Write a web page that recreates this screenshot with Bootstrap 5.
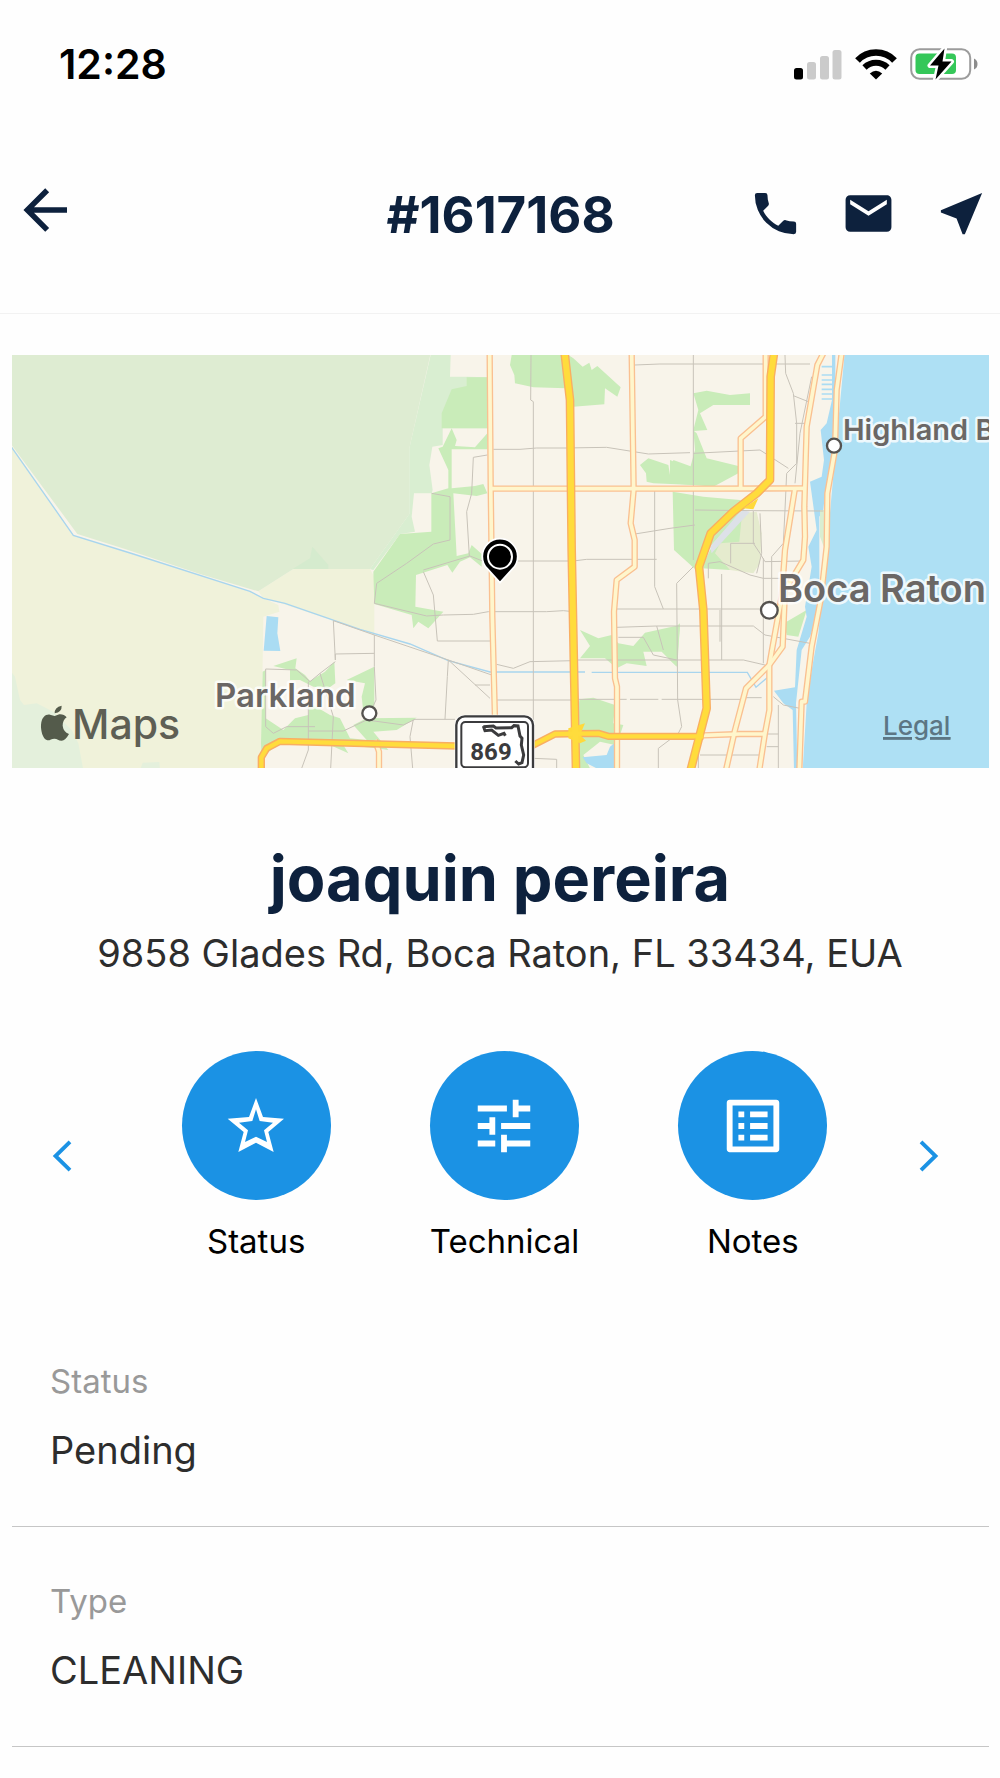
<!DOCTYPE html>
<html lang="en">
<head>
<meta charset="utf-8">
<meta name="viewport" content="width=device-width, initial-scale=1">
<title>#1617168</title>
<link href="https://cdn.jsdelivr.net/npm/bootstrap@5.3.0/dist/css/bootstrap.min.css" rel="stylesheet">
<style>
  :root { --ink: #0d213d; --accent: #1b92e4; --gutter: 12px; --gutter-end: 11px; }
  body { font-family: Inter, "Liberation Sans", sans-serif; background: #fefefe; color: #2d2d2d; }
  svg { display: block; flex: none; }
  .plain-btn { background: none; border: 0; padding: 0; color: inherit; }
  .status-strip { padding: 40px 22px 0 59px; color: #000; }
  .clock { font-size: 41px; line-height: 48px; font-weight: 600; }
  .status-icons { gap: 13px; }
  .top-bar { display: grid; grid-template-columns: 1fr auto 1fr; align-items: end; padding: 89px var(--gutter-end) 70px var(--gutter); border-bottom: 1px solid #f2f2f2; color: var(--ink); }
  .order-no { font-size: 51px; line-height: 56px; font-weight: 700; }
  .top-actions { gap: 38px; padding-bottom: 2px; }
  .map-box { margin: 41px var(--gutter-end) 0 var(--gutter); }
  .map-box svg { width: 100%; height: auto; }
  .place { font-family: Inter, "Liberation Sans", sans-serif; font-weight: 600; fill: #6b6765; stroke: #fff; stroke-opacity: .8; stroke-width: 5px; stroke-linejoin: round; paint-order: stroke; }
  .client-name { font-size: 63px; line-height: 76px; font-weight: 700; color: var(--ink); margin: 72px 0 14px; }
  .client-address { font-size: 38px; line-height: 46px; margin: 0; }
  .action-strip { padding: 0 41px 0 32px; margin-top: 75px; color: var(--accent); }
  .action-grid { padding: 0 20px 0 38px; }
  .action-disc { width: 149px; height: 149px; background: var(--accent); color: #fff; margin-bottom: 21px; }
  .action-name { font-size: 33px; line-height: 40px; color: #000; }
  .detail-list { margin: 46px var(--gutter-end) 0 var(--gutter); }
  .detail-item { padding: 54px 38px 53px; border-bottom: 1px solid #c6c6c6; }
  .detail-item dt { font-size: 33px; line-height: 40px; font-weight: 400; color: #999; margin-bottom: 26px; }
  .detail-item dd { font-size: 38px; line-height: 46px; margin: 0; }
</style>
<script src="https://cdn.jsdelivr.net/npm/bootstrap@5.3.0/dist/js/bootstrap.bundle.min.js"></script>
</head>
<body>

<div class="status-strip d-flex justify-content-between align-items-center">
  <span class="clock">12:28</span>
  <div class="status-icons d-flex align-items-center">
    <svg width="48" height="31" viewBox="0 0 48 31" aria-hidden="true">
      <rect x="0" y="19" width="9" height="11.500" rx="2.500"/>
      <g fill="#cbcbcb"><rect x="13" y="13" width="9" height="17.500" rx="2.500"/><rect x="26" y="7" width="9" height="23.500" rx="2.500"/><rect x="38.500" y="1" width="9" height="29.500" rx="2.500"/></g>
    </svg>
    <svg width="42" height="31" viewBox="0 0 42 31" fill="none" stroke="#000" aria-hidden="true">
      <path d="M2.500 11.500A25.500 25.500 0 0 1 39.500 11.500" stroke-width="6.500"/>
      <path d="M9.500 18.500A16.500 16.500 0 0 1 32.500 18.500" stroke-width="6"/>
      <path d="M14.800 24.500Q21 19 27.200 24.500L21 30.500Z" fill="#000" stroke="none"/>
    </svg>
    <svg width="68" height="32" viewBox="0 0 68 32" aria-hidden="true">
      <rect x="1.200" y="1.200" width="59" height="29.500" rx="8.500" fill="#fff" stroke="#9c9c9c" stroke-width="2"/>
      <path d="M64 10.500Q67.500 12 67.500 16T64 21.500Z" fill="#8c8c8c"/>
      <rect x="5.500" y="5.500" width="40.500" height="20.500" rx="4" fill="#35c759"/>
      <path d="M34.500.5L20 17.500H28.500L25.500 31.500L41.500 13.500H32.500Z" stroke="#fff" stroke-width="5" paint-order="stroke" stroke-linejoin="round"/>
    </svg>
  </div>
</div>

<header class="top-bar">
  <button class="plain-btn text-start" type="button" aria-label="Back">
    <svg width="66" height="66" viewBox="0 0 24 24" fill="currentColor"><path d="M20,11V13H8L13.500,18.500L12.080,19.920L4.160,12L12.080,4.080L13.500,5.500L8,11H20Z"/></svg>
  </button>
  <h1 class="order-no m-0">#1617168</h1>
  <div class="top-actions d-flex justify-content-end">
    <button class="plain-btn" type="button" aria-label="Call">
      <svg width="55" height="55" viewBox="0 0 24 24" fill="currentColor"><path d="M6.620,10.790C8.060,13.620 10.380,15.940 13.210,17.380L15.410,15.180C15.690,14.900 16.080,14.820 16.430,14.930C17.550,15.300 18.750,15.500 20,15.500A1,1 0 0,1 21,16.500V20A1,1 0 0,1 20,21A17,17 0 0,1 3,4A1,1 0 0,1 4,3H7.500A1,1 0 0,1 8.500,4C8.500,5.250 8.700,6.450 9.070,7.570C9.180,7.920 9.100,8.310 8.820,8.590L6.620,10.790Z"/></svg>
    </button>
    <button class="plain-btn" type="button" aria-label="Email">
      <svg width="55" height="55" viewBox="0 0 24 24" fill="currentColor"><path d="M20,8L12,13L4,8V6L12,11L20,6M20,4H4C2.890,4 2,4.890 2,6V18A2,2 0 0,0 4,20H20A2,2 0 0,0 22,18V6C22,4.890 21.100,4 20,4Z"/></svg>
    </button>
    <button class="plain-btn" type="button" aria-label="Navigate">
      <svg width="55" height="55" viewBox="0 0 24 24" fill="currentColor"><path d="M21 3L3 10.530V11.510L9.840 14.160L12.480 21H13.460L21 3Z"/></svg>
    </button>
  </div>
</header>

<main>
  <div class="map-box">
    <svg viewBox="0 0 977 413" role="img" aria-label="Map of Boca Raton and Parkland">
      <rect width="977" height="413" fill="#f8f4ea"/>
      <g transform="translate(348 -5) scale(.333333)">
        <!-- land cover, west -->
        <g transform="translate(-1080 0)">
          <path fill="#f0f2da" d="M30 280L220 556L400 612L750 724L790 745L835 765L838 785L790 800L783 1260H30ZM775 724L880 657H1110L1123 680V855L1000 812L850 762L790 745Z"/>
          <path fill="#e4f0dc" d="M30 960L45 980L60 1050L72 1065L110 1060L160 1085L215 1140L235 1180L250 1260H30Z"/>
          <path fill="#e4f0dc" d="M420 1260L428 1238L478 1236L480 1260Z"/>
          <path fill="#deecd2" d="M30 10H1292L1228 295V492L1110 657H880L775 724L600 672L375 597L232 552L30 278Z"/>
          <path fill="#d5ebce" d="M878 657L930 625L937 590L985 645V657Z"/>
          <path fill="#aadcf3" d="M800 798L835 802L832 850L841 903L791 902Z"/>
          <path fill="#c9ecb9" d="M820 948L890 925L886 955L915 975L930 993L975 965L1003 935L1006 1000L985 1015L940 1010L900 990H870V960Z"/>
          <path fill="#c9ecb9" d="M1040 990L1123 950V1100L1090 1085L1085 1040L1095 1000Z"/>
          <path fill="#c9ecb9" d="M788 965L797 960V1105L850 1140L885 1105L925 1095L930 1060L990 1095L1020 1105L1050 1165L1100 1170L1060 1125L1100 1105L1250 1103L1190 1140L1120 1145L1165 1200L1130 1195L1030 1185L1045 1210L990 1185H830L785 1225L783 1180Z"/>
        </g>
        <!-- land cover, centre -->
        <path fill="#d9eed1" d="M212 15H272L270 80H320L382 82V235H248V285L217 290L208 345L218 420L215 430H162L155 500L165 545L120 552L40 660L30 657L148 492V295Z"/>
        <g fill="#c9ecb9">
          <path d="M320 82H382V235H245V190L275 118L320 108Z"/>
          <path d="M248 290L275 235L290 270L285 288L345 292L382 250V298H275V415L345 408L370 402L382 430L350 438L280 430L290 618L325 610L335 585L365 612V650L330 622L300 635L277 668L262 645L168 675L166 770L250 785L205 835L175 815L160 835L155 795L43 762L40 665L120 552L214 545V430L265 415V360L235 295Z"/>
          <path d="M455 15H608L618 115L520 112L465 100L463 75L450 45Z"/>
          <path d="M625 15L640 25L668 50L688 38L695 60L712 48L782 112L772 140L735 115L733 163L640 170L630 60Z"/>
          <path d="M840 345L865 325L925 345L930 375L940 330L1000 352V405L880 400L860 395L858 370Z"/>
          <path d="M660 840L715 865L755 855L775 880L820 888L855 848L960 825L950 950L905 905L850 905L860 948L800 940L770 955L735 925L660 925L690 888Z"/>
          <path d="M658 1048L700 1043L765 1065L760 1120L790 1125L780 1155L765 1185L720 1175L670 1215L690 1255H640Z"/>
        </g>
        <path fill="#aadcf3" d="M668 1222L740 1215L750 1190L763 1180V1260H720L680 1240Z"/>
        <!-- land cover, coast -->
        <g transform="translate(930 0)">
          <path fill="#c9ecb9" d="M70 130L110 122L180 135L240 130V165H130L90 190L112 240L72 243L80 250L110 325L205 348V370L130 410L70 405L0 400V330L60 355L75 300L70 240L85 180Z"/>
          <path fill="#c9ecb9" d="M8 425L100 440L210 450L230 470L120 590L85 650L75 657L12 600Z"/>
          <path fill="#c9ecb9" d="M342 820L410 780L385 860L350 855ZM0 845L30 820L22 950L0 930Z"/>
          <path fill="#e5ebce" d="M210 490L260 485L275 550L270 640L250 670L180 660L105 640L125 600Z"/>
          <path fill="#c9ecb9" d="M95 655L120 600L140 580L215 500L208 575L150 580L135 610L180 660Z"/>
          <path fill="#dde1e8" d="M120 590L215 480L240 485L125 610Z"/>
          <path fill="#aee0f4" d="M524 10H960V1260H398L410 1060L425 960L445 850L470 600L495 320Z"/>
          <path fill="#aadcf3" d="M486 10H496V250L490 350L465 430L460 480L448 500V700L440 805L420 860L395 900L378 1060L382 1260H372L368 1080L340 1060L312 1022L375 1012L380 900L410 800L405 770L425 650L415 590L440 540L420 395L455 380L462 330L452 240L470 220L486 150Z"/>
          <path fill="#d9eed1" d="M450 480H465V600L450 560Z"/>
          <path stroke="#aadcf3" stroke-width="5" d="M455 50H488M455 75H488M455 90H488M455 103H488M455 118H488M455 132H488M455 147H488"/>
        </g>
        <!-- canals and minor roads -->
        <g fill="none" stroke="#a8d5ee" stroke-width="4">
          <path d="M-1050 285L-860 556L-680 612L-330 724L-290 745L-225 760L0 838L150 882L265 932L390 966H675M695 967H1162L1188 1012L1225 980"/>
        </g>
        <g fill="none" stroke="#c8c3b9" stroke-width="3">
          <path d="M-80 812L43 855L265 930L395 975M265 930L262 980L255 1108M265 930L390 1045M345 1005H390M-80 812L-74 930L-74 912L43 910M43 855V950L48 1050L20 1110M-74 935L-120 970L-80 1100L-88 1255M-120 970L-150 995L-190 960L-283 957V1130L-260 1150L-220 1130H-135M-155 995V1200L-175 1255M-155 1143H-50L20 1110L130 1125L165 1108H285M160 1108L150 1160L158 1255"/>
          <path d="M513 15L512 150L520 155V1110M400 298H480L530 294H620L740 292L865 312L990 308M382 315L340 322L335 430L320 485L328 618M270 570V440L215 430M270 570L220 582L140 640L50 700L43 760L200 798L250 795L340 793L385 785L560 785L610 782L640 785M190 665L220 735L232 873H390M190 660L330 618L380 638M470 633H640L680 628H890M410 943L460 955L510 935L640 932M650 930H1150L1215 945M410 1050H640M650 1048H800M810 1048H895M905 1048H1150"/>
          <path d="M884 420V710L910 777M825 552L930 535L1005 525M825 45L900 42H1350M770 777H1260M770 832L890 828H1180L1215 855L1350 880M775 862H850L880 915L950 930M890 828L910 900M1000 15V630M950 700L1000 650M950 700L953 1050L965 1130L955 1150L895 1195V1255M1080 875V780M520 1225L590 1228V1255"/>
          <path d="M1005 480L1180 482L1390 483M1000 310L1200 300L1285 355M1275 15L1277 70L1300 130L1310 220V340L1280 370L1275 480L1270 580L1235 620M1300 137L1345 155M1305 220H1335M1355 80L1320 250L1305 400M1180 482V580L1200 610L1215 635L1330 633M1112 580H1185M1112 580L1112 640M1045 685V640L1080 635L1170 675L1210 685H1270M1085 672V930M1210 625V940M1235 620V800M1200 490L1205 610L1190 670M1150 1043H1205M1255 1065V1255M1220 1190H1255M1020 1215H1200M1015 1170V1255M1240 1040L1270 1065L1320 1075M1215 1152H1255"/>
        </g>
        <!-- secondary roads: casing then fill -->
        <g fill="none" stroke-linejoin="round">
          <g stroke="#fac091" stroke-width="19">
            <path d="M389 10L392 400L397 800L405 1110"/>
            <path d="M395 416H1060L1335 415"/>
            <path d="M815 10L821 420L812 520L824 570V650L770 690L762 785L765 985L771 1010V1260"/>
            <path d="M1217 10V200L1142 265V415"/>
            <path d="M1390 10L1372 45L1340 230L1333 470L1335 560L1330 630L1300 680L1275 720L1268 890L1228 945L1158 1015L1125 1140L1098 1260"/>
            <path d="M1305 415L1275 600L1265 740L1235 905L1228 945V1080L1215 1150L1198 1260"/>
            <path d="M1445 10L1430 120L1425 300L1402 430L1400 590L1382 750L1355 890L1335 1055H1325L1318 1260"/>
            <path d="M1010 1157L1140 1152H1212"/>
            <path d="M45 1170L57 1205V1260"/>
          </g>
          <g stroke="#fff6cc" stroke-width="11">
            <path d="M389 10L392 400L397 800L405 1110"/>
            <path d="M395 416H1060L1335 415"/>
            <path d="M815 10L821 420L812 520L824 570V650L770 690L762 785L765 985L771 1010V1260"/>
            <path d="M1217 10V200L1142 265V415"/>
            <path d="M1390 10L1372 45L1340 230L1333 470L1335 560L1330 630L1300 680L1275 720L1268 890L1228 945L1158 1015L1125 1140L1098 1260"/>
            <path d="M1305 415L1275 600L1265 740L1235 905L1228 945V1080L1215 1150L1198 1260"/>
            <path d="M1445 10L1430 120L1425 300L1402 430L1400 590L1382 750L1355 890L1335 1055H1325L1318 1260"/>
            <path d="M1010 1157L1140 1152H1212"/>
            <path d="M45 1170L57 1205V1260"/>
          </g>
        </g>
        <!-- expressways -->
        <g fill="none" stroke-linejoin="round">
          <g stroke="#f9ae62">
            <path stroke-width="22" d="M-296 1260V1222L-280 1195L-240 1174L290 1188M510 1190L585 1152L715 1150L745 1159H1030"/>
            <path stroke-width="26" d="M614 10L630 150L635 600L648 1260"/>
            <path stroke-width="26" d="M1242 10L1232 80L1230 390L1190 430L1120 485L1052 550L1017 650L1030 780L1040 1075L992 1260"/>
          </g>
          <path fill="#ffd93b" d="M1150 475L1195 445L1180 478ZM625 1135L675 1120L660 1155L678 1172L660 1180L625 1165Z"/>
          <g stroke="#ffdc3c">
            <path stroke-width="13" d="M-296 1260V1222L-280 1195L-240 1174L290 1188M510 1190L585 1152L715 1150L745 1159H1030"/>
            <path stroke-width="18" d="M614 10L630 150L635 600L648 1260"/>
            <path stroke-width="18" d="M1242 10L1232 80L1230 390L1190 430L1120 485L1052 550L1017 650L1030 780L1040 1075L992 1260"/>
          </g>
        </g>
        <!-- route shield -->
        <rect x="284" y="1094" width="240" height="190" rx="30" fill="#fff"/>
        <rect x="289" y="1099" width="230" height="190" rx="26" fill="#fff" stroke="#3b3b3d" stroke-width="7"/>
        <rect x="304" y="1116" width="200" height="136" rx="12" fill="#fff" stroke="#3b3b3d" stroke-width="6"/>
        <path d="M370 1128L375 1142L395 1140L415 1156L432 1150L436 1157M370 1130L400 1128L408 1134L455 1133L462 1127L474 1128L480 1158L486 1165L484 1185L491 1215L486 1238L476 1242L466 1233" fill="none" stroke="#3b3b3d" stroke-width="9"/>
        <!-- town markers -->
        <g fill="#fff" stroke="#55524f" stroke-width="7"><circle cx="28" cy="1090" r="21"/><circle cx="1422" cy="287" r="21"/><circle cx="1228" cy="781" r="25"/></g>
        <!-- job pin -->
        <path d="M420 698L382 656A53 53 0 1 1 458 656Z" stroke="#fff" stroke-width="5"/>
        <circle cx="420" cy="620" r="36" fill="#000" stroke="#fff" stroke-width="6"/>
        <!-- map provider mark -->
        <path transform="translate(-1080 0)" fill="#545b4b" d="M164 1090Q163 1072 185 1067Q186 1086 164 1090ZM200 1102Q188 1110 188 1127Q190 1145 207 1152Q196 1172 185 1172C175 1172 172 1166 163 1166S150 1172 142 1171C128 1168 122 1140 123 1125C125 1100 138 1092 150 1094L164 1098L178 1093Q192 1092 200 1102Z"/>
      </g>
      <text x="479" y="405" font-family="Roboto, sans-serif" font-weight="700" font-size="24" fill="#3b3b3d" text-anchor="middle">869</text>
      <text class="place" x="203" y="352" font-size="33">Parkland</text>
      <text class="place" x="831" y="85" font-size="29">Highland Beach</text>
      <text class="place" x="766" y="247" font-size="38">Boca Raton</text>
      <text x="60" y="384" font-size="41" font-weight="500" fill="#5e5f54">Maps</text>
      <a href="#legal"><text x="871" y="380" font-size="26" font-weight="500" fill="#5c7684" text-decoration="underline">Legal</text></a>
    </svg>
  </div>

  <section class="text-center">
    <h2 class="client-name">joaquin pereira</h2>
    <p class="client-address">9858 Glades Rd, Boca Raton, FL 33434, EUA</p>
  </section>

  <nav class="action-strip d-flex align-items-center" aria-label="Order sections">
    <button class="plain-btn" type="button" aria-label="Previous">
      <svg width="62" height="62" viewBox="0 0 24 24" fill="none" stroke="currentColor" stroke-width="1.500"><path d="M14.700 6.500L9.100 12L14.700 17.500"/></svg>
    </button>
    <div class="action-grid row g-0 flex-fill">
      <div class="col-4 d-flex justify-content-center">
        <button class="plain-btn d-flex flex-column align-items-center" type="button">
          <span class="action-disc rounded-circle d-flex align-items-center justify-content-center">
            <svg width="62" height="62" viewBox="676 192 186 186" fill="currentColor" fill-rule="evenodd"><path d="M769 201L790 258L853 263L806 303L822 363L769 335L716 363L732 303L684 263L748 258ZM769 235L758 270L718 275L745 298L736 333L769 317L802 333L793 298L820 275L780 270Z"/></svg>
          </span>
          <span class="action-name">Status</span>
        </button>
      </div>
      <div class="col-4 d-flex justify-content-center">
        <button class="plain-btn d-flex flex-column align-items-center" type="button">
          <span class="action-disc rounded-circle d-flex align-items-center justify-content-center">
            <svg width="70" height="70" viewBox="0 0 24 24" fill="currentColor"><path d="M3,17V19H9V17H3M3,5V7H13V5H3M13,21V19H21V17H13V15H11V21H13M7,9V11H3V13H7V15H9V9H7M21,13V11H11V13H21M15,9H17V7H21V5H17V3H15V9Z"/></svg>
          </span>
          <span class="action-name">Technical</span>
        </button>
      </div>
      <div class="col-4 d-flex justify-content-center">
        <button class="plain-btn d-flex flex-column align-items-center" type="button">
          <span class="action-disc rounded-circle d-flex align-items-center justify-content-center">
            <svg width="70" height="70" viewBox="0 0 24 24" fill="currentColor"><path d="M11 15H17V17H11V15M9 7H7V9H9V7M11 13H17V11H11V13M11 9H17V7H11V9M9 11H7V13H9V11M21 4V20C21 20.550 20.550 21 20 21H4C3.450 21 3 20.550 3 20V4C3 3.450 3.450 3 4 3H20C20.550 3 21 3.450 21 4M19 5H5V19H19V5M9 15H7V17H9V15Z"/></svg>
          </span>
          <span class="action-name">Notes</span>
        </button>
      </div>
    </div>
    <button class="plain-btn" type="button" aria-label="Next">
      <svg width="62" height="62" viewBox="0 0 24 24" fill="none" stroke="currentColor" stroke-width="1.500"><path d="M9.300 6.500L14.900 12L9.300 17.500"/></svg>
    </button>
  </nav>

  <dl class="detail-list">
    <div class="detail-item"><dt>Status</dt><dd>Pending</dd></div>
    <div class="detail-item"><dt>Type</dt><dd>CLEANING</dd></div>
  </dl>
</main>
</body>
</html>
